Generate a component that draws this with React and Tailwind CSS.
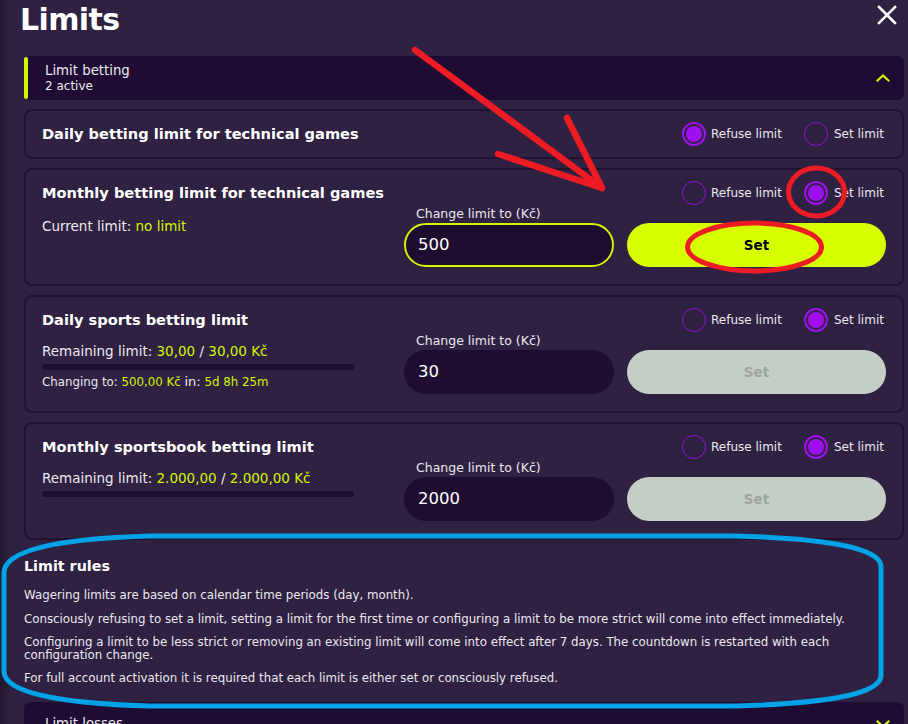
import React from 'react';

const YELLOW = 'text-[#d4f500]';

function Radio({ checked }) {
  if (checked) {
    return (
      <span className="flex h-6 w-6 items-center justify-center rounded-full border-2 border-[#a010ee]">
        <span className="h-4 w-4 rounded-full bg-[#a010ee]" />
      </span>
    );
  }
  return <span className="h-6 w-6 rounded-full border-[1.5px] border-[#9a10e4]" />;
}

function RadioGroup({ value }) {
  return (
    <div className="flex h-6 items-center justify-end text-[12px] text-[#ece8f0]">
      <label className="flex w-[122px] items-center gap-[5px]">
        <Radio checked={value === 'refuse'} />
        <span>Refuse limit</span>
      </label>
      <label className="flex w-[82px] items-center gap-[6px]">
        <Radio checked={value === 'set'} />
        <span>Set limit</span>
      </label>
    </div>
  );
}

function LimitCard({ title, value, children, amount, active }) {
  return (
    <div className="flex rounded-[8px] border-2 border-[#211330] px-[16px] pt-[11px] pb-[17px]">
      <div className="flex-1">
        <h3 className="text-[14.6px] font-bold leading-[24px] text-white">{title}</h3>
        {children}
      </div>
      <div className="w-[482px]">
        <RadioGroup value={value} />
        <p className="pl-[12px] text-[12.5px] leading-[18px] text-[#ece8f0]">Change limit to (Kč)</p>
        <div className="flex h-[44px] gap-[13px]">
          <div
            className={
              active
                ? 'flex w-[210px] items-center rounded-full border-2 border-[#d4f500] bg-[#1f0d31] pl-[12px] text-[16.5px] text-white'
                : 'flex w-[210px] items-center rounded-full bg-[#1f0d31] pl-[14px] text-[16.5px] text-white'
            }
          >
            {amount}
          </div>
          <button
            className={
              active
                ? 'flex-1 rounded-full bg-[#d7ff00] text-[13.5px] font-bold text-black'
                : 'flex-1 rounded-full bg-[#c4cec5] text-[13.5px] font-bold text-[#9ea59e]'
            }
          >
            Set
          </button>
        </div>
      </div>
    </div>
  );
}

function Remaining({ left, total }) {
  return (
    <>
      <p className="mt-[9px] text-[13.5px] leading-[20px] text-[#ece8f0]">
        Remaining limit: <span className={YELLOW}>{left}</span> / <span className={YELLOW}>{total} Kč</span>
      </p>
      <div className="mt-[3px] h-[6px] w-[312px] rounded-full bg-[#1f0d31]" />
    </>
  );
}

function Chevron({ up }) {
  return (
    <svg width="14" height="8" viewBox="0 0 14 8" fill="none" stroke="#d4f500" strokeWidth="2.2" strokeLinecap="square">
      {up ? <path d="M1.5 6.5 L7 1.5 L12.5 6.5" /> : <path d="M1.5 1.5 L7 6.5 L12.5 1.5" />}
    </svg>
  );
}

export default function App() {
  return (
    <div
      className="relative flex h-[724px] w-full overflow-hidden bg-[#2f2141] text-white"
      style={{ fontFamily: '"DejaVu Sans", sans-serif' }}
    >
      <div className="w-[9px] shrink-0 bg-gradient-to-r from-[#221731] to-[#2d2040]" />
      <div className="flex-1">
        <div className="flex h-[56px] items-start justify-between pl-[11px] pr-[11px]">
          <h1 className="text-[30px] font-bold leading-[40px] tracking-[-0.6px]">Limits</h1>
          <svg className="mt-[5px]" width="20" height="20" viewBox="0 0 20 20" stroke="white" strokeWidth="2.6" strokeLinecap="square">
            <path d="M2 2 L18 18 M18 2 L2 18" />
          </svg>
        </div>

        <div className="pl-[15px] pr-[4px]">
          <div className="flex h-[44px] items-center rounded-[6px] bg-[#1f0c33] pr-[14px]">
            <div className="h-[42px] w-[4px] rounded-full bg-[#d4f500]" />
            <div className="flex-1 pl-[17px]">
              <p className="text-[13.3px] leading-[16px] text-[#ece8f0]">Limit betting</p>
              <p className="text-[12px] leading-[15px] text-[#ece8f0]">2 active</p>
            </div>
            <Chevron up />
          </div>

          <div className="mt-[9px] flex flex-col gap-[9px]">
            <div className="flex h-[50px] items-center justify-between rounded-[8px] border-2 border-[#211330] px-[16px]">
              <h3 className="text-[14.6px] font-bold text-white">Daily betting limit for technical games</h3>
              <RadioGroup value="refuse" />
            </div>

            <LimitCard title="Monthly betting limit for technical games" value="set" amount="500" active>
              <p className="mt-[11px] text-[13.5px] leading-[20px] text-[#ece8f0]">
                Current limit: <span className={YELLOW}>no limit</span>
              </p>
            </LimitCard>

            <LimitCard title="Daily sports betting limit" value="set" amount="30">
              <Remaining left="30,00" total="30,00" />
              <p className="mt-[4px] text-[11.8px] leading-[16px] text-[#ece8f0]">
                Changing to: <span className={YELLOW}>500,00 Kč</span> <span className="text-[13px]">in:</span>{' '}
                <span className={YELLOW}>5d 8h 25m</span>
              </p>
            </LimitCard>

            <LimitCard title="Monthly sportsbook betting limit" value="set" amount="2000">
              <Remaining left="2.000,00" total="2.000,00" />
            </LimitCard>
          </div>

          <div className="mt-[16px]">
            <h3 className="text-[14.3px] font-bold leading-[20px] text-white">Limit rules</h3>
            <div className="mt-[13px] w-[860px] space-y-[11px] text-[11.8px] leading-[12.5px] text-[#ece8f0]">
              <p>Wagering limits are based on calendar time periods (day, month).</p>
              <p>
                Consciously refusing to set a limit, setting a limit for the first time or configuring a limit to be more
                strict will come into effect immediately.
              </p>
              <p>
                Configuring a limit to be less strict or removing an existing limit will come into effect after 7 days. The
                countdown is restarted with each configuration change.
              </p>
              <p>For full account activation it is required that each limit is either set or consciously refused.</p>
            </div>
          </div>

          <div className="mt-[17px] flex h-[44px] items-center rounded-[6px] bg-[#1f0c33] pl-[21px] pr-[14px]">
            <p className="flex-1 text-[13.3px] text-[#ece8f0]">Limit losses</p>
            <Chevron />
          </div>
        </div>
      </div>

      <svg className="pointer-events-none absolute left-0 top-0" width="908" height="724" fill="none">
        <g stroke="#ed1c24" strokeWidth="6.5" strokeLinecap="round" strokeLinejoin="round">
          <path d="M415 50 L602 188" />
          <path d="M567 118 L602 188 L498 154" />
        </g>
        <ellipse cx="816.5" cy="192" rx="28" ry="24" stroke="#ed1c24" strokeWidth="5" />
        <ellipse cx="754.5" cy="247" rx="67" ry="24" stroke="#ed1c24" strokeWidth="5" />
        <path
          d="M150 536 L735 536 Q879 540 881 566 L881 676 Q879 702 735 706 L150 706 Q6 702 4 672 L4 572 Q6 540 150 536 Z"
          stroke="#00a2e8"
          strokeWidth="5"
        />
      </svg>
    </div>
  );
}
